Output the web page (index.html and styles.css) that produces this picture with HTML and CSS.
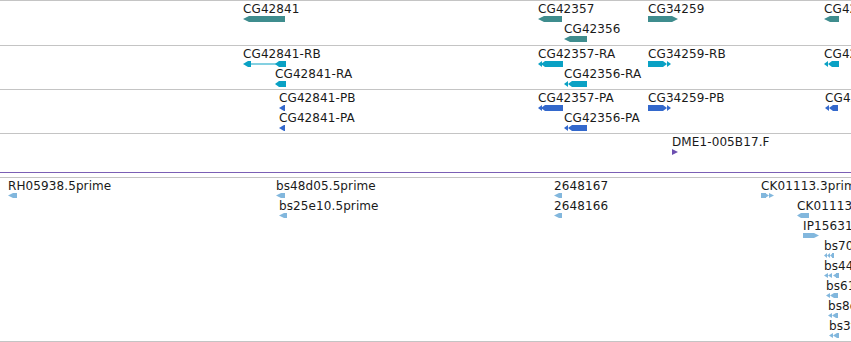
FILE: index.html
```html
<!DOCTYPE html>
<html lang="en">
<head>
    <meta charset="UTF-8">
    <title>Tracks</title>
    <link rel="stylesheet" href="styles.css">
</head>
<body>
    <div class="tracks">
        <!-- genes -->
        <div class="track gene">
            <div class="feat" style="left:243px; top:1px">
                <span class="label">CG42841</span>
                <svg width="42" height="6"><polygon points="0,3 6,0 42,0 42,6 6,6"/></svg>
            </div>
            <div class="feat" style="left:538px; top:1px">
                <span class="label">CG42357</span>
                <svg width="24" height="6"><polygon points="0,3 6,0 24,0 24,6 6,6"/></svg>
            </div>
            <div class="feat" style="left:564px; top:21px">
                <span class="label">CG42356</span>
                <svg width="23" height="6"><polygon points="0,3 6,0 23,0 23,6 6,6"/></svg>
            </div>
            <div class="feat" style="left:648px; top:1px">
                <span class="label">CG34259</span>
                <svg width="30" height="6"><polygon points="0,0 24,0 30,3 24,6 0,6"/></svg>
            </div>
            <div class="feat" style="left:824px; top:1px">
                <span class="label">CG42359</span>
                <svg width="15" height="6"><polygon points="0,3 6,0 15,0 15,6 6,6"/></svg>
            </div>
        </div>

        <!-- transcripts -->
        <div class="track mrna">
            <div class="feat" style="left:243px; top:1px">
                <span class="label">CG42841-RB</span>
                <svg width="43" height="6">
                    <polygon points="0,3 5,0 8,0 8,6 5,6"/>
                    <rect x="8" y="2.5" width="26" height="1"/>
                    <polygon points="32,3 36,0 43,0 43,6 36,6"/>
                </svg>
            </div>
            <div class="feat" style="left:275px; top:21px">
                <span class="label">CG42841-RA</span>
                <svg width="11" height="6"><polygon points="0,3 4,0 11,0 11,6 4,6"/></svg>
            </div>
            <div class="feat" style="left:538px; top:1px">
                <span class="label">CG42357-RA</span>
                <svg width="25" height="6">
                    <polygon points="0,3 4,0 4,6"/><polygon points="3,3 7,0 7,6"/>
                    <rect x="7" y="0" width="18" height="6"/>
                </svg>
            </div>
            <div class="feat" style="left:564px; top:21px">
                <span class="label">CG42356-RA</span>
                <svg width="23" height="6">
                    <polygon points="0,3 4,0 4,6"/><polygon points="4,3 8,0 8,6"/>
                    <rect x="8" y="0" width="15" height="6"/>
                </svg>
            </div>
            <div class="feat" style="left:648px; top:1px">
                <span class="label">CG34259-RB</span>
                <svg width="23" height="6">
                    <rect x="0" y="0" width="15" height="6"/>
                    <polygon points="15,0 19,3 15,6"/><polygon points="19,0 23,3 19,6"/>
                </svg>
            </div>
            <div class="feat" style="left:824px; top:1px">
                <span class="label">CG42359-RA</span>
                <svg width="15" height="6">
                    <polygon points="0,3 4,0 4,6"/><polygon points="4,3 8,0 8,6"/>
                    <rect x="8" y="0" width="7" height="6"/>
                </svg>
            </div>
        </div>

        <!-- proteins -->
        <div class="track cds">
            <div class="feat" style="left:279px; top:1px">
                <span class="label">CG42841-PB</span>
                <svg width="6" height="6"><polygon points="0,3 5,0 6,0 6,6 5,6"/></svg>
            </div>
            <div class="feat" style="left:279px; top:21px">
                <span class="label">CG42841-PA</span>
                <svg width="6" height="6"><polygon points="0,3 5,0 6,0 6,6 5,6"/></svg>
            </div>
            <div class="feat" style="left:538px; top:1px">
                <span class="label">CG42357-PA</span>
                <svg width="25" height="6">
                    <polygon points="0,3 4,0 4,6"/><polygon points="3,3 7,0 7,6"/>
                    <rect x="7" y="0" width="18" height="6"/>
                </svg>
            </div>
            <div class="feat" style="left:564px; top:21px">
                <span class="label">CG42356-PA</span>
                <svg width="23" height="6">
                    <polygon points="0,3 4,0 4,6"/><polygon points="4,3 8,0 8,6"/>
                    <rect x="8" y="0" width="15" height="6"/>
                </svg>
            </div>
            <div class="feat" style="left:648px; top:1px">
                <span class="label">CG34259-PB</span>
                <svg width="23" height="6">
                    <rect x="0" y="0" width="15" height="6"/>
                    <polygon points="15,0 19,3 15,6"/><polygon points="19,0 23,3 19,6"/>
                </svg>
            </div>
            <div class="feat" style="left:825px; top:1px">
                <span class="label">CG42359-PA</span>
                <svg width="13" height="6">
                    <polygon points="0,3 4,0 4,6"/><polygon points="4,3 8,0 8,6"/>
                    <rect x="8" y="0" width="5" height="6"/>
                </svg>
            </div>
        </div>

        <!-- clones -->
        <div class="track clone">
            <div class="feat" style="left:672px; top:1px">
                <span class="label">DME1-005B17.F</span>
                <svg width="6" height="6"><polygon points="0,0 6,3 0,6"/></svg>
            </div>
        </div>

        <!-- ESTs -->
        <div class="track est">
            <div class="feat" style="left:8px; top:1px">
                <span class="label">RH05938.5prime</span>
                <svg width="9" height="5"><polygon points="0,2.5 5,0 9,0 9,5 5,5"/></svg>
            </div>
            <div class="feat" style="left:276px; top:1px">
                <span class="label">bs48d05.5prime</span>
                <svg width="9" height="5"><polygon points="0,2.5 5,0 9,0 9,5 5,5"/></svg>
            </div>
            <div class="feat" style="left:279px; top:21px">
                <span class="label">bs25e10.5prime</span>
                <svg width="8" height="5"><polygon points="0,2.5 5,0 8,0 8,5 5,5"/></svg>
            </div>
            <div class="feat" style="left:554px; top:1px">
                <span class="label">2648167</span>
                <svg width="8" height="5"><polygon points="0,2.5 5,0 8,0 8,5 5,5"/></svg>
            </div>
            <div class="feat" style="left:554px; top:21px">
                <span class="label">2648166</span>
                <svg width="8" height="5"><polygon points="0,2.5 5,0 8,0 8,5 5,5"/></svg>
            </div>
            <div class="feat" style="left:761px; top:1px">
                <span class="label">CK01113.3prime</span>
                <svg width="13" height="5">
                    <rect x="0" y="0" width="5" height="5"/>
                    <polygon points="4,0 8,2.5 4,5"/><polygon points="8,0 13,2.5 8,5"/>
                </svg>
            </div>
            <div class="feat" style="left:797px; top:21px">
                <span class="label">CK01113.5prime</span>
                <svg width="12" height="5"><polygon points="0,2.5 4,0 12,0 12,5 4,5"/></svg>
            </div>
            <div class="feat" style="left:803px; top:41px">
                <span class="label">IP15631.3prime</span>
                <svg width="16" height="5"><polygon points="0,0 11,0 16,2.5 11,5 0,5"/></svg>
            </div>
            <div class="feat" style="left:824px; top:61px">
                <span class="label">bs70a11.5prime</span>
                <svg width="10" height="5">
                    <polygon points="0,2.5 3,0 3,5"/><polygon points="3,2.5 6,0 6,5"/>
                    <polygon points="6,2.5 9,0 9,5"/><rect x="8" y="0" width="2" height="5"/>
                </svg>
            </div>
            <div class="feat" style="left:824px; top:81px">
                <span class="label">bs44c02.5prime</span>
                <svg width="15" height="5">
                    <polygon points="0,2.5 4,0 4,5"/><polygon points="4,2.5 8,0 8,5"/>
                    <polygon points="9,2.5 13,0 13,5"/><rect x="12" y="0" width="3" height="5"/>
                </svg>
            </div>
            <div class="feat" style="left:826px; top:101px">
                <span class="label">bs61g05.5prime</span>
                <svg width="12" height="5">
                    <polygon points="0,2.5 4,0 4,5"/><polygon points="4,2.5 8,0 8,5"/>
                    <rect x="8" y="0" width="4" height="5"/>
                </svg>
            </div>
            <div class="feat" style="left:828px; top:121px">
                <span class="label">bs8d09.5prime</span>
                <svg width="10" height="5">
                    <polygon points="0,2.5 4,0 4,5"/><polygon points="4,2.5 8,0 8,5"/>
                    <rect x="8" y="0" width="2" height="5"/>
                </svg>
            </div>
            <div class="feat" style="left:829px; top:141px">
                <span class="label">bs3f12.5prime</span>
                <svg width="10" height="5">
                    <polygon points="0,2.5 4,0 4,5"/><polygon points="4,2.5 8,0 8,5"/>
                    <rect x="8" y="0" width="2" height="5"/>
                </svg>
            </div>
        </div>
    </div>
</body>
</html>
```

FILE: styles.css
```css
body {
    margin: 0;
    background-color: #ffffff;
    font-family: 'DejaVu Sans', sans-serif;
    color: #1a1a1a;
    overflow: hidden;
}

.tracks {
    width: 851px;
    height: 342px;
    overflow: hidden;
    display: flex;
    flex-direction: column;
}

.track {
    position: relative;
    flex: none;
    height: 43px;
    border-top: 1px solid #c4c4c4;
}

.track.gene {
    height: 44px;
}

.track.clone {
    height: 38px;
    border-bottom: 1px solid #7b5fb5;
    margin-bottom: 4px;
}

.track.est {
    height: 163px;
    border-bottom: 1px solid #c4c4c4;
}

.feat {
    position: absolute;
    display: flex;
    flex-direction: column;
    align-items: flex-start;
}

.label {
    font-size: 12px;
    line-height: 14px;
    letter-spacing: 0.1px;
    white-space: nowrap;
}

.feat svg {
    display: block;
    fill: currentColor;
}

.gene svg { color: #3f8d8e; }
.mrna svg { color: #0aa1c4; }
.cds svg { color: #3368cc; }
.clone svg { color: #6c4fb0; }
.est svg { color: #82b7dd; }
```
